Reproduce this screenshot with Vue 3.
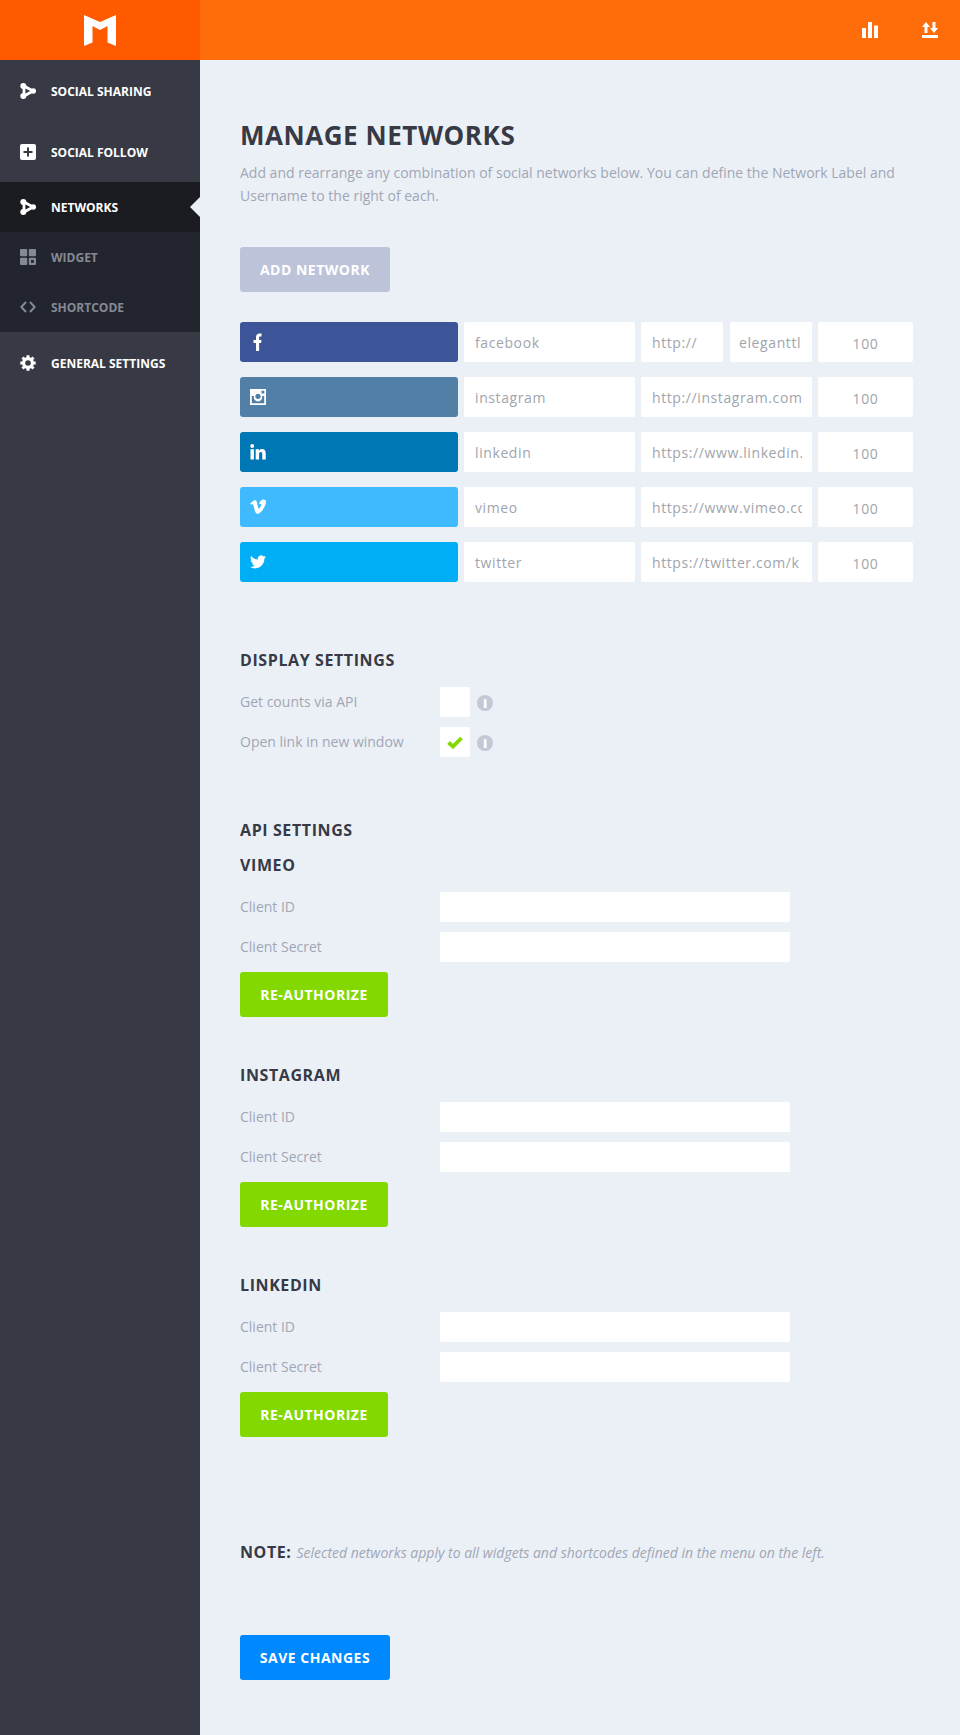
<script setup>
const networks = [
  { name: 'facebook', color: '#3b5598', icon: 'fb', url: 'http://', user: 'eleganttl' },
  { name: 'instagram', color: '#517fa6', icon: 'ig', url: 'http://instagram.com/' },
  { name: 'linkedin', color: '#0077b5', icon: 'in', url: 'https://www.linkedin.com' },
  { name: 'vimeo', color: '#40baff', icon: 'vm', url: 'https://www.vimeo.com' },
  { name: 'twitter', color: '#00aef5', icon: 'tw', url: 'https://twitter.com/k' }
]

const apiGroups = ['VIMEO', 'INSTAGRAM', 'LINKEDIN']
</script>

<template>
  <div class="page">
    <aside class="sidebar">
      <div class="logo">
        <svg width="32" height="31" viewBox="0 0 32 31">
          <path d="M0 0 L16 7 L32 0 V31 L23.5 27.5 V11 L16 15 L8.5 11 V27.5 L0 31 Z" fill="#fff" />
        </svg>
      </div>
      <nav>
        <a class="nav-item top">
          <svg class="nav-icon" viewBox="0 0 16 16">
            <path d="M4 3 L13 8 L4 13 Z" fill="none" stroke="#fff" stroke-width="2.8" />
            <circle cx="3.3" cy="3" r="3" fill="#fff" />
            <circle cx="3.3" cy="13" r="3" fill="#fff" />
            <circle cx="13.3" cy="8" r="2.7" fill="#fff" />
          </svg>
          <span>SOCIAL SHARING</span>
        </a>
        <a class="nav-item top">
          <svg class="nav-icon" viewBox="0 0 16 16">
            <rect width="16" height="16" rx="2" fill="#fff" />
            <path d="M8 3.5 V12.5 M3.5 8 H12.5" stroke="#373a45" stroke-width="2" />
          </svg>
          <span>SOCIAL FOLLOW</span>
        </a>
        <div class="submenu">
          <a class="nav-item sub active">
            <svg class="nav-icon" viewBox="0 0 16 16">
              <path d="M4 3 L13 8 L4 13 Z" fill="none" stroke="#fff" stroke-width="2.8" />
              <circle cx="3.3" cy="3" r="3" fill="#fff" />
              <circle cx="3.3" cy="13" r="3" fill="#fff" />
              <circle cx="13.3" cy="8" r="2.7" fill="#fff" />
            </svg>
            <span>NETWORKS</span>
          </a>
          <a class="nav-item sub">
            <svg class="nav-icon" viewBox="0 0 16 16" fill="#858996">
              <rect width="7.2" height="7.2" rx="1" />
              <rect x="8.8" width="7.2" height="7.2" rx="1" />
              <rect y="8.8" width="7.2" height="7.2" rx="1" />
              <path fill-rule="evenodd" d="M9.8 8.8 H15 a1 1 0 0 1 1 1 V15 a1 1 0 0 1 -1 1 H9.8 a1 1 0 0 1 -1 -1 V9.8 a1 1 0 0 1 1 -1 Z M11 11 V13.8 H13.8 V11 Z" />
            </svg>
            <span>WIDGET</span>
          </a>
          <a class="nav-item sub">
            <svg class="nav-icon" viewBox="0 0 16 16" fill="none" stroke="#858996" stroke-width="2">
              <path d="M6 3 L1.3 8 L6 13 M10 3 L14.7 8 L10 13" />
            </svg>
            <span>SHORTCODE</span>
          </a>
        </div>
        <a class="nav-item top">
          <svg class="nav-icon" viewBox="0 0 16 16">
            <circle cx="8" cy="8" r="4.4" fill="none" stroke="#fff" stroke-width="3.2" />
            <path d="M8 8 V0.3 M8 8 V15.7 M8 8 H0.3 M8 8 H15.7 M8 8 L2.5 2.5 M8 8 L13.5 13.5 M8 8 L13.5 2.5 M8 8 L2.5 13.5" stroke="#fff" stroke-width="3" stroke-dasharray="7.7 20" stroke-dashoffset="-3.5" />
          </svg>
          <span>GENERAL SETTINGS</span>
        </a>
      </nav>
    </aside>

    <div class="right">
      <header class="topbar">
        <svg width="16" height="16" viewBox="0 0 16 16" fill="#fff">
          <rect x="0" y="6" width="4" height="10" />
          <rect x="6" y="0" width="4" height="16" />
          <rect x="12" y="3.5" width="4" height="12.5" />
        </svg>
        <svg width="16" height="16" viewBox="0 0 16 16" fill="#fff">
          <path d="M4 0 L8 5 H5.5 V11 H2.5 V5 H0 Z" />
          <path d="M12 11 L16 6 H13.5 V0 H10.5 V6 H8 Z" />
          <rect y="13" width="16" height="3" />
        </svg>
      </header>

      <main class="content">
        <h1>MANAGE NETWORKS</h1>
        <p class="intro">Add and rearrange any combination of social networks below. You can define the Network Label and Username to the right of each.</p>

        <button class="btn btn-add">ADD NETWORK</button>

        <div class="network-list">
          <div v-for="n in networks" :key="n.name" class="network-row">
            <div class="network-bar" :style="{ background: n.color }">
              <svg v-if="n.icon === 'fb'" width="16" height="18" viewBox="0 0 16 18" fill="#fff">
                <path d="M6 18 V10 H3.5 V7 H6 V4.5 C6 1.8 7.4 0.5 9.7 0.5 H11.5 V3.4 H10.4 C9.4 3.4 9.1 3.8 9.1 4.7 V7 H11.5 L11.1 10 H9.1 V18 Z" />
              </svg>
              <svg v-if="n.icon === 'ig'" width="16" height="16" viewBox="0 0 16 16">
                <path fill="#fff" fill-rule="evenodd" d="M0 0 H16 V16 H0 Z M1.8 7 V14.2 H14.2 V7 H12 A4.2 4.2 0 1 1 4 7 Z M8 4.8 A2.6 2.6 0 1 0 8.01 4.8 Z M11.5 1.7 V4.6 H14.3 V1.7 Z" />
              </svg>
              <svg v-if="n.icon === 'in'" width="16" height="16" viewBox="0 0 16 16" fill="#fff">
                <circle cx="2.2" cy="2" r="1.9" />
                <rect x="0.5" y="5.2" width="3.4" height="10.3" />
                <path d="M5.7 5.2 H8.9 V6.7 C9.5 5.7 10.6 5 12 5 C14.7 5 15.7 6.7 15.7 9.5 V15.5 H12.3 V10.2 C12.3 8.9 12 8 10.9 8 C9.7 8 9.1 8.9 9.1 10.2 V15.5 H5.7 Z" />
              </svg>
              <svg v-if="n.icon === 'vm'" width="16" height="16" viewBox="0 0 16 16" fill="#fff">
                <path d="M0.2 4.6 C1.7 3.3 3.4 1.2 5.1 1.2 C7 1.2 7 4 7.5 6.2 C7.9 8 8.2 9.6 8.8 9.6 C9.7 9.6 11.6 6.5 11.3 5.5 C11 4.6 9.9 4.9 9.1 5.3 C9.7 2 11.7 0.5 13.8 0.6 C15.6 0.7 16.2 2.2 15.9 4.1 C15.4 7.5 10.7 14.8 7.7 14.8 C5 14.8 4.4 9.5 3.4 6.6 C3 5.4 2.6 4.9 1.2 5.8 Z" />
              </svg>
              <svg v-if="n.icon === 'tw'" width="16" height="14" viewBox="0 0 24 20" fill="#fff">
                <path d="M24 2.4 a9.8 9.8 0 0 1 -2.8 .8 A4.9 4.9 0 0 0 23.3 .5 a9.8 9.8 0 0 1 -3.1 1.2 A4.9 4.9 0 0 0 11.8 6.2 A13.9 13.9 0 0 1 1.7 1 A4.9 4.9 0 0 0 3.2 7.6 A4.9 4.9 0 0 1 1 7 v.1 a4.9 4.9 0 0 0 3.9 4.8 a4.9 4.9 0 0 1 -2.2 .1 a4.9 4.9 0 0 0 4.6 3.4 A9.9 9.9 0 0 1 0 17.4 A13.9 13.9 0 0 0 7.5 19.6 c9.1 0 14-7.5 14-14 v-.6 A10 10 0 0 0 24 2.4 Z" />
              </svg>
            </div>
            <div class="field field-label"><span>{{ n.name }}</span></div>
            <template v-if="n.user">
              <div class="field field-half"><span>{{ n.url }}</span></div>
              <div class="field field-half"><span>{{ n.user }}</span></div>
            </template>
            <div v-else class="field field-url"><span>{{ n.url }}</span></div>
            <div class="field field-count"><span>100</span></div>
          </div>
        </div>

        <h2 class="display-title">DISPLAY SETTINGS</h2>
        <div class="option">
          <label>Get counts via API</label>
          <div class="check"></div>
          <span class="info">i</span>
        </div>
        <div class="option">
          <label>Open link in new window</label>
          <div class="check">
            <svg width="16" height="13" viewBox="0 0 16 13">
              <path d="M1.5 6.5 L6 10.5 L14.5 2" fill="none" stroke="#83d800" stroke-width="3.8" />
            </svg>
          </div>
          <span class="info">i</span>
        </div>

        <h2 class="api-title">API SETTINGS</h2>
        <section v-for="g in apiGroups" :key="g" class="api-group">
          <h2>{{ g }}</h2>
          <div class="api-row">
            <label>Client ID</label>
            <input class="api-input" type="text" />
          </div>
          <div class="api-row">
            <label>Client Secret</label>
            <input class="api-input" type="text" />
          </div>
          <button class="btn btn-auth">RE-AUTHORIZE</button>
        </section>

        <p class="note"><strong>NOTE:</strong> <em>Selected networks apply to all widgets and shortcodes defined in the menu on the left.</em></p>

        <button class="btn btn-save">SAVE CHANGES</button>
      </main>
    </div>
  </div>
</template>

<style>
body {
  background: #ebf0f7;
}
</style>

<style scoped>
* {
  box-sizing: border-box;
}

.page {
  display: flex;
  width: 960px;
  height: 1735px;
  overflow: hidden;
  font-family: "Open Sans", "Liberation Sans", sans-serif;
  background: #ebf0f7;
}

.sidebar {
  width: 200px;
  flex-shrink: 0;
  background: #373a45;
}

.logo {
  height: 60px;
  background: #ff5a00;
  display: flex;
  align-items: center;
  justify-content: center;
}

.nav-item {
  display: flex;
  align-items: center;
  gap: 15px;
  padding-left: 20px;
  font-size: 12px;
  font-weight: 700;
  color: #fff;
}

.nav-icon {
  width: 16px;
  height: 16px;
  flex-shrink: 0;
}

.nav-item.top {
  height: 61px;
  padding-top: 1px;
}

.submenu {
  background: #23252e;
}

.nav-item.sub {
  height: 50px;
  color: #858996;
}

.nav-item.sub.active {
  position: relative;
  background: #1b1c21;
  color: #fff;
}

.nav-item.sub.active::after {
  content: "";
  position: absolute;
  right: 0;
  top: 15px;
  border: 10px solid transparent;
  border-left: 0;
  border-right-color: #ebf0f7;
}

.right {
  flex: 1;
  min-width: 0;
}

.topbar {
  height: 60px;
  background: #ff6d0a;
  display: flex;
  align-items: center;
  justify-content: flex-end;
  gap: 44px;
  padding-right: 22px;
}

.content {
  padding: 60px 0 0 40px;
}

h1 {
  margin: 0;
  font-size: 26px;
  line-height: 30px;
  font-weight: 700;
  letter-spacing: 0.55px;
  color: #373a45;
}

.intro {
  margin: 11px 0 0;
  width: 680px;
  font-size: 14px;
  line-height: 23px;
  color: #a1a6b4;
}

.btn {
  display: block;
  height: 45px;
  border: 0;
  border-radius: 3px;
  font-family: inherit;
  font-size: 14px;
  font-weight: 700;
  letter-spacing: 0.5px;
  color: #fff;
}

.btn-add {
  width: 150px;
  margin-top: 40px;
  background: #bdc4da;
}

.network-list {
  margin-top: 30px;
  display: flex;
  flex-direction: column;
  gap: 15px;
}

.network-row {
  display: flex;
  gap: 6px;
}

.network-bar {
  width: 218px;
  height: 40px;
  border-radius: 3px;
  display: flex;
  align-items: center;
  padding-left: 10px;
}

.field {
  height: 40px;
  background: #fff;
  border-radius: 2px;
  padding: 0 10px 0 11px;
  display: flex;
  align-items: center;
  font-size: 14px;
  letter-spacing: 0.6px;
  color: #a1a4ac;
}

.field span {
  flex: 1;
  min-width: 0;
  overflow: hidden;
  white-space: nowrap;
}

.field-label {
  width: 171px;
}

.field-half {
  width: 82px;
}

.field-half + .field-half {
  margin-left: 1px;
  padding-left: 9px;
}

.field-url {
  width: 171px;
}

.field-count {
  width: 95px;
  text-align: center;
  padding: 2px 0 0;
}

.display-title,
.api-title,
.api-group h2 {
  margin: 0;
  font-size: 16px;
  line-height: 22px;
  font-weight: 700;
  letter-spacing: 0.6px;
  color: #373a45;
}

.display-title {
  margin-top: 67px;
  margin-bottom: 16px;
}

.option {
  display: flex;
  align-items: center;
  height: 30px;
  margin-bottom: 10px;
}

.option label,
.api-row label {
  width: 200px;
  flex-shrink: 0;
  font-size: 14px;
  color: #a1a6b4;
  padding-bottom: 1px;
}

.check {
  width: 30px;
  height: 30px;
  background: #fff;
  border-radius: 2px;
  display: flex;
  align-items: center;
  justify-content: center;
}

.info {
  width: 16px;
  height: 16px;
  margin-left: 7px;
  margin-top: 2px;
  border-radius: 50%;
  background: #c3c8d6;
  color: #fff;
  font-size: 13px;
  font-weight: 800;
  line-height: 16px;
  text-align: center;
}

.api-title {
  margin-top: 62px;
  margin-bottom: 13px;
}

.api-group {
  height: 210px;
}

.api-row {
  display: flex;
  align-items: center;
  height: 30px;
  margin-bottom: 10px;
}

.api-group h2 {
  margin-bottom: 16px;
}

.api-input {
  width: 350px;
  height: 30px;
  border: 0;
  border-radius: 2px;
  background: #fff;
  padding: 0 10px;
}

.btn-auth {
  width: 148px;
  background: #83d800;
}

.note {
  margin: 57px 0 0;
  display: flex;
  align-items: baseline;
  gap: 5px;
  font-size: 14px;
  line-height: 22px;
  color: #a1a6b4;
}

.note strong {
  font-size: 16px;
  letter-spacing: 0.6px;
  color: #373a45;
}

.btn-save {
  width: 150px;
  margin-top: 71px;
  background: #0088ff;
}
</style>
